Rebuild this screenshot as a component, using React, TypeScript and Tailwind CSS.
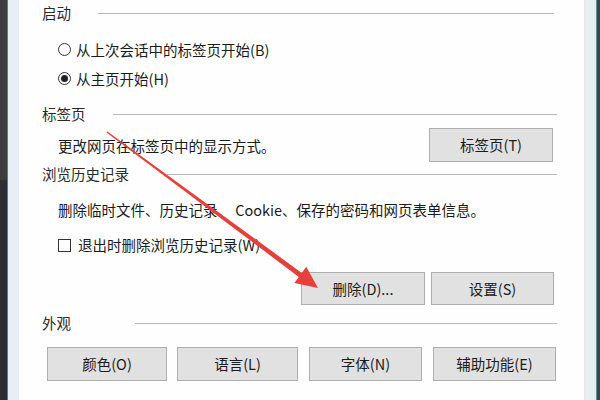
import React from 'react'

const font = { fontFamily: '"Noto Sans CJK SC", "Noto Sans", sans-serif' }

function Header({ text, w, className }: { text: string; w: number; className?: string }) {
  return (
    <div className={`flex items-center ${className ?? ''}`}>
      <span className="shrink-0 text-[14.5px] leading-none text-[#2a2a2a]" style={{ width: w }}>
        {text}
      </span>
      <div className="h-px flex-1 bg-[#b9b9b9]" />
    </div>
  )
}

function Btn({ label, w, className }: { label: string; w: number; className?: string }) {
  return (
    <div
      className={`flex h-full shrink-0 items-center justify-center border border-[#adadad] bg-[#e1e1e1] text-[14.5px] text-[#1b1b1b] ${className ?? ''}`}
      style={{ width: w }}
    >
      {label}
    </div>
  )
}

export default function App() {
  return (
    <div className="relative flex h-[400px] w-[600px] overflow-hidden bg-white" style={font}>
      {/* left window frame */}
      <div className="flex w-[7px] shrink-0 flex-col">
        <div className="h-[180px] bg-[#3d3d3d]" />
        <div className="flex-1 bg-[#2b2e32]" />
      </div>
      <div className="w-px shrink-0 bg-[#4f7ca8]" />
      <div className="w-[11px] shrink-0 bg-[#e9eef6]" />

      {/* dialog content */}
      <div className="flex min-w-0 flex-1 flex-col bg-[#fefefe] pl-[23px] pr-[27px] text-[#1b1b1b]">
        <Header text="启动" w={56} className="h-[27px] pr-[3px]" />

        <div className="mt-[8px] flex h-[29px] items-center pl-[16px] text-[14.5px]">
          <span className="mr-[5px] h-[13px] w-[13px] rounded-full border border-[#333]" />
          从上次会话中的标签页开始(B)
        </div>
        <div className="flex h-[29px] items-center pl-[16px] text-[14.5px]">
          <span className="mr-[5px] flex h-[13px] w-[13px] items-center justify-center rounded-full border border-[#333]">
            <span className="h-[7px] w-[7px] rounded-full bg-[#222]" />
          </span>
          从主页开始(H)
        </div>

        <Header text="标签页" w={71} className="mt-[8px] h-[27px]" />
        <div className="flex h-[34px] items-center justify-between pl-[16px]">
          <span className="mt-[2px] text-[14.5px]">更改网页在标签页中的显示方式。</span>
          <div className="mr-[4px] h-full">
            <Btn label="标签页(T)" w={124} />
          </div>
        </div>

        <Header text="浏览历史记录" w={125} className="h-[25px]" />
        <div className="mt-[9px] flex h-[28px] items-center pl-[16px] text-[14.5px]">
          删除临时文件、历史记录、 Cookie、保存的密码和网页表单信息。
        </div>
        <div className="mt-[7px] flex h-[28px] items-center pl-[16px] text-[14.5px]">
          <span className="mr-[7px] h-[13px] w-[13px] border border-[#333]" />
          退出时删除浏览历史记录(W)
        </div>
        <div className="mt-[13px] flex h-[33px] justify-end gap-[6px] pr-[3px]">
          <Btn label="删除(D)..." w={124} />
          <Btn label="设置(S)" w={123} />
        </div>

        <Header text="外观" w={93} className="mt-[5px] h-[26px]" />
        <div className="mt-[11px] flex h-[34px] pl-[5px]">
          <Btn label="颜色(O)" w={120} />
          <Btn label="语言(L)" w={121} className="ml-[10px]" />
          <Btn label="字体(N)" w={113} className="ml-[11px]" />
          <Btn label="辅助功能(E)" w={123} className="ml-[11px]" />
        </div>
      </div>

      {/* right window frame */}
      <div className="w-[2px] shrink-0 bg-[#ece7eb]" />
      <div className="w-[10px] shrink-0 bg-[#e6eef2]" />
      <div className="w-px shrink-0 bg-[#5e8e9a]" />
      <div className="w-[3px] shrink-0 bg-[#3b4447]" />

      {/* red annotation arrow */}
      <svg className="pointer-events-none absolute inset-0" width="600" height="400" viewBox="0 0 600 400">
        <polygon
          points="107.45,131.4 301.8,272.9 306.25,266.85 318,288 294.35,282.95 298.8,276.9 106.55,132.6"
          fill="#e5403c"
        />
      </svg>
    </div>
  )
}
